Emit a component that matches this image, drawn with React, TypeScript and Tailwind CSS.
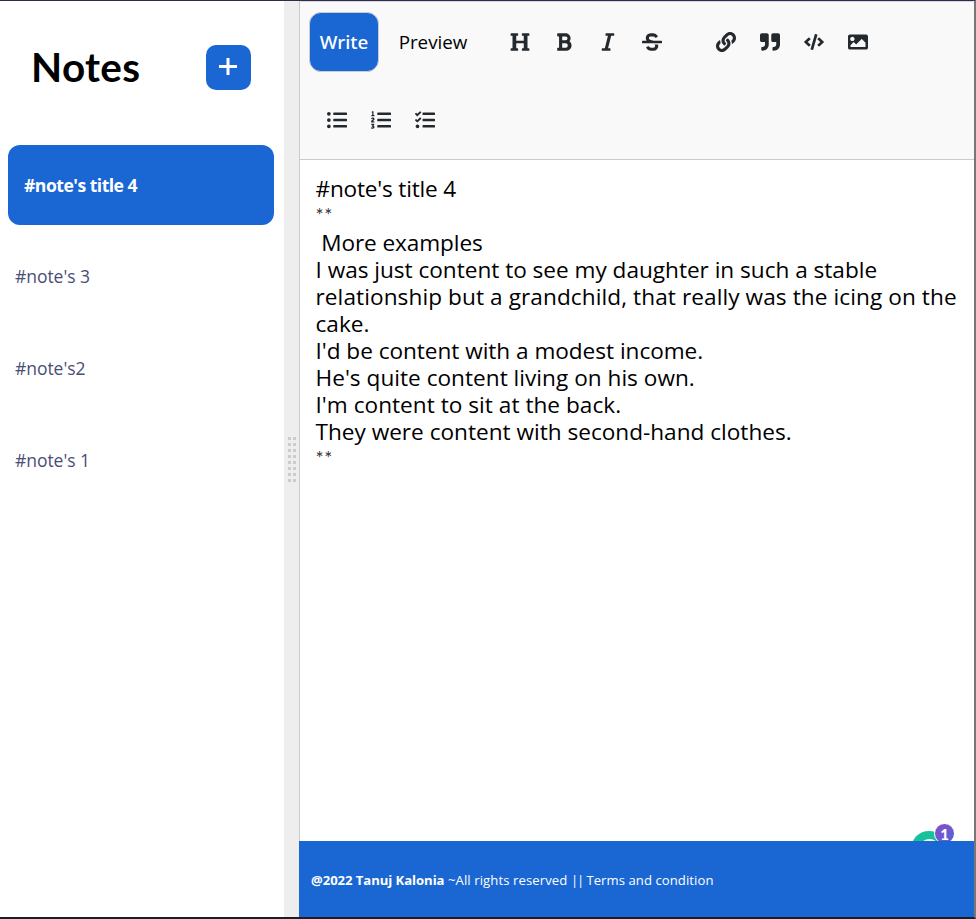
import type { IconType } from "react-icons";
import {
  FaHeading, FaBold, FaItalic, FaStrikethrough, FaLink, FaQuoteRight,
  FaCode, FaImage, FaListUl, FaListOl, FaTasks,
} from "react-icons/fa";

const notes = ["#note's 3", "#note's2", "#note's 1"];
const textTools = [FaHeading, FaBold, FaItalic, FaStrikethrough];
const insertTools = [FaLink, FaQuoteRight, FaCode, FaImage];
const listTools = [FaListUl, FaListOl, FaTasks];

const content: { text: string; tracking: string }[] = [
  { text: "#note's title 4", tracking: "tracking-[-0.2px]" },
  { text: "**", tracking: "" },
  { text: " More examples", tracking: "tracking-[-0.1px]" },
  { text: "I was just content to see my daughter in such a stable", tracking: "tracking-[-0.015px]" },
  { text: "relationship but a grandchild, that really was the icing on the", tracking: "tracking-[0.09px]" },
  { text: "cake.", tracking: "" },
  { text: "I'd be content with a modest income.", tracking: "tracking-[-0.03px]" },
  { text: "He's quite content living on his own.", tracking: "tracking-[0.02px]" },
  { text: "I'm content to sit at the back.", tracking: "tracking-[0.03px]" },
  { text: "They were content with second-hand clothes.", tracking: "" },
  { text: "**", tracking: "" },
];

function ToolGroup({ icons }: { icons: IconType[] }) {
  return (
    <div className="flex">
      {icons.map((Icon, i) => (
        <button key={i} className="flex h-[60px] w-11 items-center justify-center text-[#24292e]">
          <Icon size={20} />
        </button>
      ))}
    </div>
  );
}

function Sidebar() {
  return (
    <aside className="w-[284px] shrink-0 bg-white">
      <header className="flex h-36 items-start justify-between pt-[44px] pr-[33px] pl-[31px]">
        <h1 className="-mt-px font-[Lato,sans-serif] text-[40.5px] leading-[46px] font-bold tracking-[0.3px] text-black">Notes</h1>
        <button aria-label="Add note" className="flex size-[45px] items-center justify-center rounded-[10px] bg-[#1a67d4]">
          <svg width="18" height="18" viewBox="0 0 18 18" className="mr-px mb-[3px]" fill="none" stroke="white" strokeWidth="3">
            <path d="M0 9.5h18M9 1v17" />
          </svg>
        </button>
      </header>
      <div className="mx-2 flex h-20 w-[266px] items-center rounded-xl bg-[#1a67d4] pl-4 text-[17.6px] font-bold tracking-[-0.52px] text-white">
        #note's title 4
      </div>
      <ul className="mt-[5px] text-[17.5px] tracking-[-0.05px] text-[#4a4e74]">
        {notes.map((n) => (
          <li key={n} className="flex h-[92px] items-center pl-[15px]">{n}</li>
        ))}
      </ul>
    </aside>
  );
}

function Gutter() {
  return (
    <div className="flex w-[15px] shrink-0 justify-center bg-[#eeeeee] pt-[436px]">
      <div className="grid h-[45px] grid-cols-2 gap-x-[2px] gap-y-[3px]">
        {Array.from({ length: 16 }, (_, i) => (
          <span key={i} className="size-[3px] bg-[#cccccc]" />
        ))}
      </div>
    </div>
  );
}

function Toolbar() {
  return (
    <div className="flex h-[159px] flex-wrap content-start gap-y-[18px] rounded-t-[2px] border-t border-b border-t-[#d5d3e6] border-b-[#c8ccd0] bg-[#f9f9f9] pt-[10px] pl-[9px] text-[18.8px]">
      <div className="flex">
        <button className="h-[60px] w-[70px] rounded-xl border border-[#c8ccd0] bg-[#1a67d4] text-center font-['Noto_Sans',sans-serif] font-medium text-white">
          Write
        </button>
        <button className="h-[60px] w-[108px] text-center text-black">Preview</button>
      </div>
      <div className="ml-[11px] flex gap-[30px]">
        <ToolGroup icons={textTools} />
        <ToolGroup icons={insertTools} />
      </div>
      <div className="ml-[6px] w-full">
        <ToolGroup icons={listTools} />
      </div>
    </div>
  );
}

export default function App() {
  return (
    <div className="flex h-[919px] w-[976px] flex-col overflow-hidden border-t border-r-2 border-b-2 border-t-[#2f2d44] border-r-[#777777] border-b-[#1d1d24] bg-white font-['Open_Sans','Noto_Sans',sans-serif]">
      <div className="flex h-[916px]">
        <Sidebar />
        <Gutter />
        <main className="flex min-w-0 flex-1 flex-col">
          <section className="relative flex h-[840px] flex-col overflow-hidden border-l border-[#c8ccd0]">
            <Toolbar />
            <div className="pt-[15px] pl-[15.5px] text-[22.6px] leading-[27px] text-black">
              {content.map(({ text, tracking }, i) =>
                text === "**" ? (
                  <div key={i} className="h-[27px] font-[Lato,sans-serif] text-[19px] leading-[25px] tracking-[0.6px] text-[#333]">{text}</div>
                ) : (
                  <div key={i} className={`h-[27px] whitespace-pre ${tracking}`}>{text}</div>
                ),
              )}
            </div>
            <div className="absolute top-[830px] left-[611px] flex size-[36px] items-center justify-center rounded-full bg-[#15c39a]">
              <span className="size-[21px] rounded-full border-[3px] border-white" />
            </div>
            <div className="absolute top-[822px] left-[634px] flex size-[21px] items-center justify-center rounded-full border border-white bg-linear-to-br from-[#8a4cc0] to-[#4a63e0] font-[Lato,sans-serif] text-[15px] leading-[18px] font-black text-white">
              1
            </div>
          </section>
          <footer className="flex h-[76px] items-center bg-[#1a67d4] pt-[3px] pl-3 text-[13.1px] whitespace-pre text-white">
            <b className="tracking-[-0.05px]">@2022 Tanuj Kalonia</b>
            <span className="tracking-[0.1px]"> ~All rights reserved </span>
            <span className="tracking-[-1.2px]">||</span>
            <span className="tracking-[0.07px]"> Terms and condition</span>
          </footer>
        </main>
      </div>
    </div>
  );
}
